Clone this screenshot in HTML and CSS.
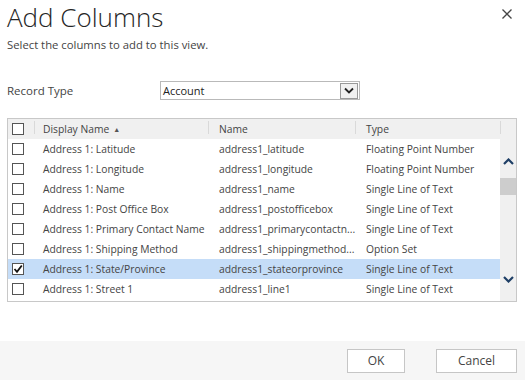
FILE: index.html
```html
<!DOCTYPE html>
<html lang="en">

<head>
    <meta charset="UTF-8">
    <title>Add Columns</title>
    <link rel="stylesheet" href="styles.css">
</head>

<body>
    <div class="dialog">
        <!-- header -->
        <div class="dialog-header">
            <h1>Add Columns</h1>
            <button class="close-btn" title="Close">
                <svg width="10" height="10" viewBox="0 0 10 10"><path d="M0.5 0.5 L9.5 9.5 M9.5 0.5 L0.5 9.5" stroke="#444" stroke-width="1.3" fill="none"/></svg>
            </button>
        </div>
        <p class="subtitle">Select the columns to add to this view.</p>

        <!-- record type -->
        <div class="record-type">
            <label>Record Type</label>
            <div class="select-box">
                <span>Account</span>
                <span class="select-btn">
                    <svg width="10" height="7" viewBox="0 0 10 7"><path d="M1 1.5 L5 5.5 L9 1.5" stroke="#222" stroke-width="1.8" fill="none"/></svg>
                </span>
            </div>
        </div>

        <!-- columns grid -->
        <div class="grid">
            <div class="grid-head">
                <div class="cell cb-cell"><span class="checkbox"></span></div>
                <div class="cell col-display">Display Name <span class="sort">&#9650;</span></div>
                <div class="cell col-name">Name</div>
                <div class="cell col-type">Type</div>
                <div class="cell col-scroll"></div>
            </div>
            <div class="grid-body">
                <div class="rows">
                    <div class="row">
                        <div class="cell cb-cell"><span class="checkbox"></span></div>
                        <div class="cell col-display">Address 1: Latitude</div>
                        <div class="cell col-name">address1_latitude</div>
                        <div class="cell col-type">Floating Point Number</div>
                    </div>
                    <div class="row">
                        <div class="cell cb-cell"><span class="checkbox"></span></div>
                        <div class="cell col-display">Address 1: Longitude</div>
                        <div class="cell col-name">address1_longitude</div>
                        <div class="cell col-type">Floating Point Number</div>
                    </div>
                    <div class="row">
                        <div class="cell cb-cell"><span class="checkbox"></span></div>
                        <div class="cell col-display">Address 1: Name</div>
                        <div class="cell col-name">address1_name</div>
                        <div class="cell col-type">Single Line of Text</div>
                    </div>
                    <div class="row">
                        <div class="cell cb-cell"><span class="checkbox"></span></div>
                        <div class="cell col-display">Address 1: Post Office Box</div>
                        <div class="cell col-name">address1_postofficebox</div>
                        <div class="cell col-type">Single Line of Text</div>
                    </div>
                    <div class="row">
                        <div class="cell cb-cell"><span class="checkbox"></span></div>
                        <div class="cell col-display">Address 1: Primary Contact Name</div>
                        <div class="cell col-name">address1_primarycontactn...</div>
                        <div class="cell col-type">Single Line of Text</div>
                    </div>
                    <div class="row">
                        <div class="cell cb-cell"><span class="checkbox"></span></div>
                        <div class="cell col-display">Address 1: Shipping Method</div>
                        <div class="cell col-name">address1_shippingmethod...</div>
                        <div class="cell col-type">Option Set</div>
                    </div>
                    <div class="row selected">
                        <div class="cell cb-cell"><span class="checkbox checked">
                            <svg width="10" height="10" viewBox="0 0 10 10"><path d="M1.5 5 L4 7.8 L8.8 1.5" stroke="#111" stroke-width="1.8" fill="none"/></svg>
                        </span></div>
                        <div class="cell col-display">Address 1: State/Province</div>
                        <div class="cell col-name">address1_stateorprovince</div>
                        <div class="cell col-type">Single Line of Text</div>
                    </div>
                    <div class="row">
                        <div class="cell cb-cell"><span class="checkbox"></span></div>
                        <div class="cell col-display">Address 1: Street 1</div>
                        <div class="cell col-name">address1_line1</div>
                        <div class="cell col-type">Single Line of Text</div>
                    </div>
                </div>
                <!-- scrollbar -->
                <div class="scrollbar">
                    <svg class="arrow-up" width="11" height="7" viewBox="0 0 11 7"><path d="M1 6 L5.5 1.5 L10 6" stroke="#1f3f66" stroke-width="2.2" fill="none"/></svg>
                    <div class="thumb"></div>
                    <div class="spacer"></div>
                    <svg class="arrow-down" width="11" height="7" viewBox="0 0 11 7"><path d="M1 1 L5.5 5.5 L10 1" stroke="#1f3f66" stroke-width="2.2" fill="none"/></svg>
                </div>
            </div>
        </div>

        <!-- footer -->
        <div class="dialog-footer">
            <button class="btn btn-ok">OK</button>
            <button class="btn btn-cancel">Cancel</button>
        </div>
    </div>
</body>

</html>
```

FILE: styles.css
```css
/* page */
body {
    margin: 0;
    font-family: 'Segoe UI', 'Open Sans', sans-serif;
    font-size: 11px;
    color: #444;
    background: white;
}

.dialog {
    width: 525px;
    height: 380px;
    display: flex;
    flex-direction: column;
}

/* header */
.dialog-header {
    display: flex;
    justify-content: space-between;
    align-items: flex-start;
    padding: 0 13px 0 7px;
}

h1 {
    margin: 0;
    font-size: 26px;
    font-weight: 300;
    line-height: 34px;
    color: #262626;
}

.close-btn {
    border: none;
    background: none;
    padding: 0;
    margin-top: 9px;
    width: 10px;
    height: 10px;
    display: flex;
}

.subtitle {
    margin: 4px 0 0 7px;
    font-size: 11.3px;
    line-height: 14px;
    color: #444;
}

/* record type */
.record-type {
    display: flex;
    align-items: center;
    margin: 29px 0 0 7px;
}

.record-type label {
    width: 153px;
    font-size: 11.5px;
}

.select-box {
    box-sizing: border-box;
    width: 200px;
    height: 19px;
    border: 1px solid #b9b9b9;
    display: flex;
    align-items: center;
    justify-content: space-between;
    padding-left: 2px;
    color: #222;
}

.select-btn {
    width: 18px;
    height: 16px;
    margin-right: 1px;
    border: 1px solid #999;
    background: #f0f0f0;
    box-sizing: border-box;
    display: flex;
    align-items: center;
    justify-content: center;
}

/* grid */
.grid {
    box-sizing: border-box;
    margin: 18px 8px 0 7px;
    border: 1px solid #c8c8c8;
    height: 184px;
    display: flex;
    flex-direction: column;
    font-size: 10.3px;
}

.grid-head {
    display: flex;
    height: 20px;
    background: #f0f0f0;
    flex-shrink: 0;
}

.grid-head .cell {
    position: relative;
}

.grid-head .cell + .cell::before {
    content: '';
    position: absolute;
    left: 0;
    top: 2px;
    bottom: 5px;
    border-left: 1px solid #d9d9d9;
}

.grid-body {
    display: flex;
    flex: 1;
}

.rows {
    flex: 1;
}

.row {
    display: flex;
    height: 20px;
}

.row.selected {
    background: #c5ddf8;
}

.cell {
    box-sizing: border-box;
    display: flex;
    align-items: center;
    white-space: nowrap;
    overflow: hidden;
}

.cb-cell {
    width: 26px;
    padding-left: 4px;
}

.col-display {
    width: 174px;
    padding-left: 9px;
}

.col-name {
    width: 147px;
    padding-left: 11px;
}

.col-type {
    width: 145px;
    padding-left: 11px;
}

.col-scroll {
    flex: 1;
}

.sort {
    font-size: 7px;
    margin-left: 4px;
    color: #555;
}

.checkbox {
    width: 10px;
    height: 10px;
    border: 1px solid #555;
    background: white;
    display: flex;
    align-items: center;
    justify-content: center;
}

/* scrollbar */
.scrollbar {
    width: 17px;
    background: #f0f0f0;
    display: flex;
    flex-direction: column;
    align-items: center;
}

.arrow-up {
    margin-top: 19px;
}

.thumb {
    width: 100%;
    height: 17px;
    background: #cdcdcd;
    margin-top: 13px;
}

.spacer {
    flex: 1;
}

.arrow-down {
    margin-bottom: 18px;
}

/* footer */
.dialog-footer {
    margin-top: auto;
    height: 39px;
    background: #f6f6f6;
    display: flex;
    justify-content: flex-end;
    align-items: center;
    gap: 31px;
    padding-right: 8px;
}

.btn {
    font-family: inherit;
    font-size: 12px;
    color: #444;
    background: white;
    border: 1px solid #c6c6c6;
    height: 24px;
    padding: 0;
}

.btn-ok {
    width: 58px;
}

.btn-cancel {
    width: 81px;
}
```
